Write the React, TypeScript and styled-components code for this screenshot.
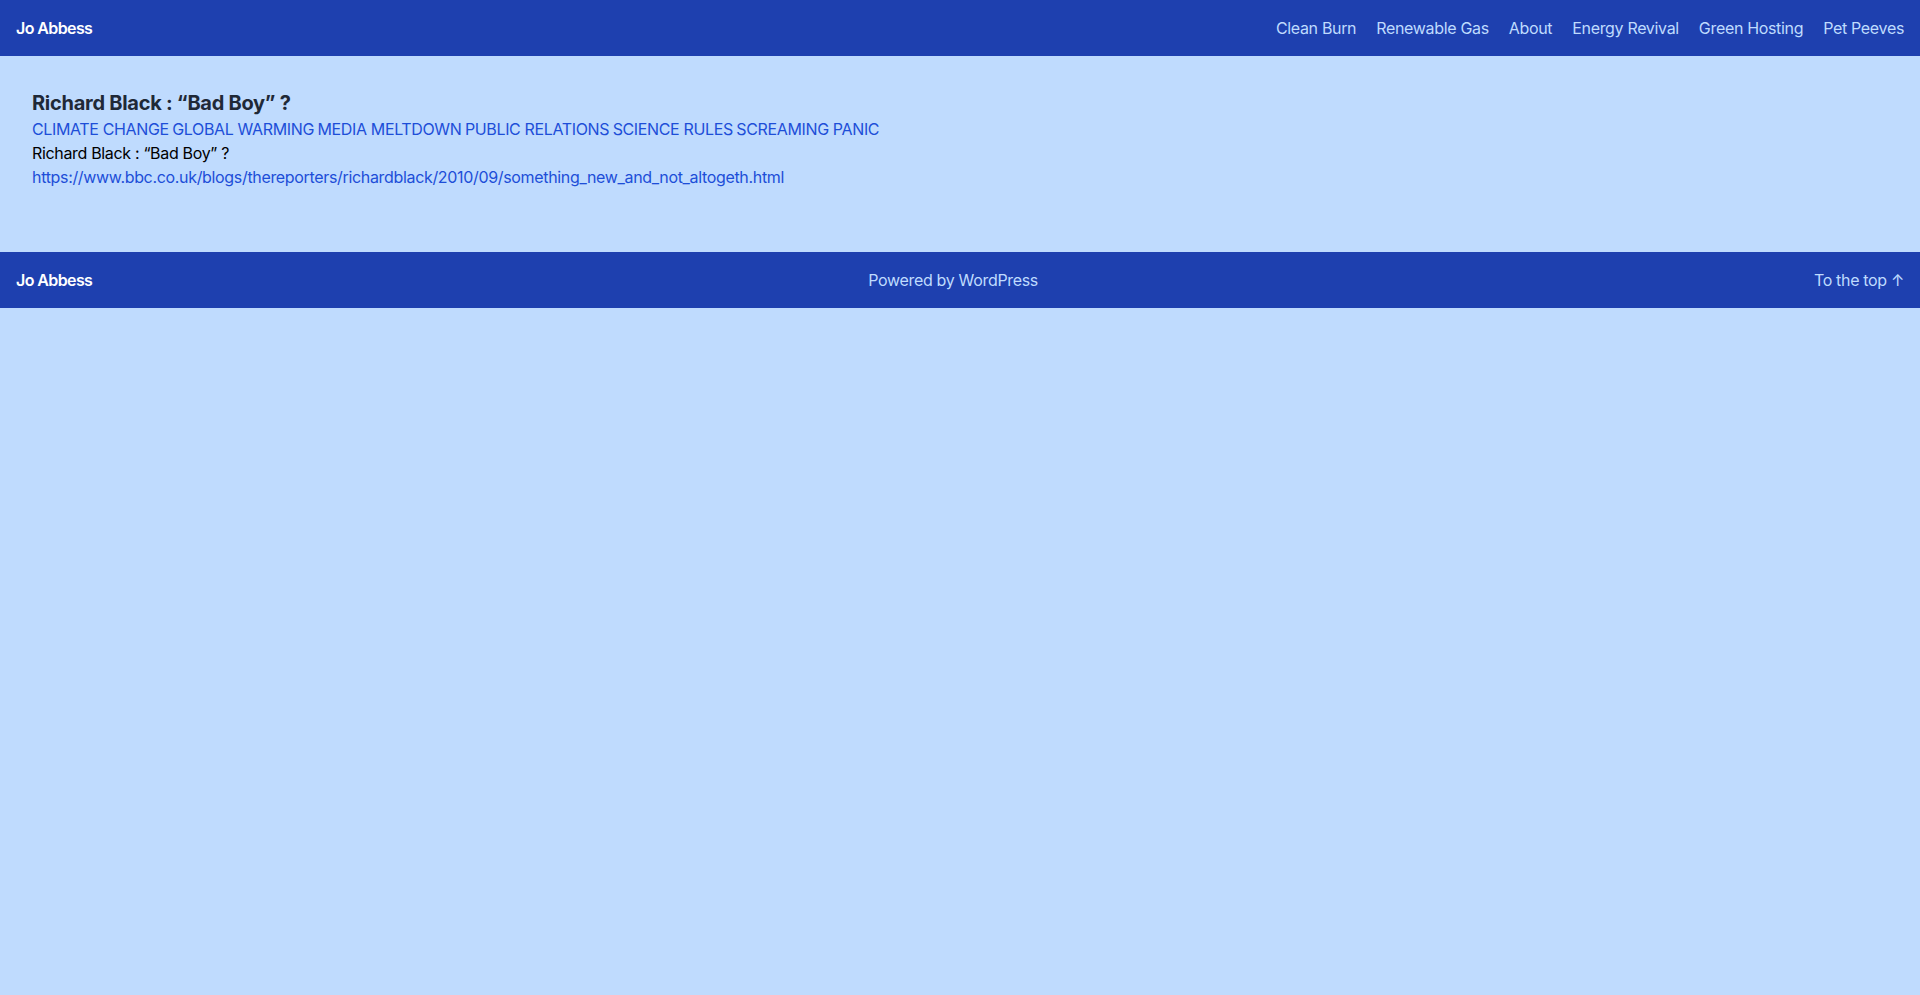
import React from "react";
import styled, { createGlobalStyle } from "styled-components";

const Global = createGlobalStyle`
  html, body {
    margin: 0;
    padding: 0;
    background: #bfdbfe;
    font-family: Inter, "Liberation Sans", Arial, sans-serif;
    font-size: 16px;
    line-height: 1.5;
    letter-spacing: -0.33px;
    color: #000;
    -webkit-font-smoothing: antialiased;
  }
  * { box-sizing: border-box; }
`;

const Page = styled.div`
  min-height: 995px;
  background: #bfdbfe;
  display: flex;
  flex-direction: column;
`;

const Bar = styled.header`
  height: 56px;
  background: #1e40af;
  display: flex;
  align-items: center;
  justify-content: space-between;
  padding: 0 16px;
`;

const FooterBar = styled(Bar).attrs({ as: "footer" })``;

const SiteTitle = styled.a`
  color: #ffffff;
  font-weight: 600;
  font-size: 16px;
  letter-spacing: -0.6px;
  text-decoration: none;
`;

const Nav = styled.nav`
  display: flex;
  align-items: center;
  gap: 20px;
`;

const NavLink = styled.a`
  color: #bfdbfe;
  font-size: 16px;
  text-decoration: none;
`;

const FooterText = styled.span`
  color: #bfdbfe;
  font-size: 16px;
`;

const Main = styled.main`
  padding: 33px 32px 63px;
`;

const Article = styled.article`
  display: flex;
  flex-direction: column;
`;

const Title = styled.h1`
  margin: 0;
  font-size: 20px;
  line-height: 28px;
  font-weight: 700;
  letter-spacing: -0.27px;
  color: #1f2937;
`;

const Tags = styled.div`
  display: flex;
  flex-wrap: wrap;
  gap: 3.5px;
  line-height: 24px;
  letter-spacing: -0.36px;
`;

const Tag = styled.a`
  color: #1d4ed8;
  text-decoration: none;
  text-transform: uppercase;
`;

const Para = styled.p`
  margin: 0;
  line-height: 24px;
`;

const Link = styled.a`
  color: #1d4ed8;
  text-decoration: none;
`;

const tags = [
  "Climate Change",
  "Global Warming",
  "Media Meltdown",
  "Public Relations",
  "Science Rules",
  "Screaming Panic",
];

const nav = ["Clean Burn", "Renewable Gas", "About", "Energy Revival", "Green Hosting", "Pet Peeves"];

export default function App() {
  const url =
    "https://www.bbc.co.uk/blogs/thereporters/richardblack/2010/09/something_new_and_not_altogeth.html";
  return (
    <Page>
      <Global />
      <Bar>
        <SiteTitle href="#">Jo Abbess</SiteTitle>
        <Nav>
          {nav.map((n) => (
            <NavLink key={n} href="#">
              {n}
            </NavLink>
          ))}
        </Nav>
      </Bar>
      <Main>
        <Article>
          <Title>Richard Black : “Bad Boy” ?</Title>
          <Tags>
            {tags.map((t) => (
              <Tag key={t} href="#">
                {t}
              </Tag>
            ))}
          </Tags>
          <Para>Richard Black : “Bad Boy” ?</Para>
          <Para>
            <Link href="#">{url}</Link>
          </Para>
        </Article>
      </Main>
      <FooterBar>
        <SiteTitle href="#">Jo Abbess</SiteTitle>
        <FooterText>Powered by WordPress</FooterText>
        <FooterText>To the top ↑</FooterText>
      </FooterBar>
    </Page>
  );
}
